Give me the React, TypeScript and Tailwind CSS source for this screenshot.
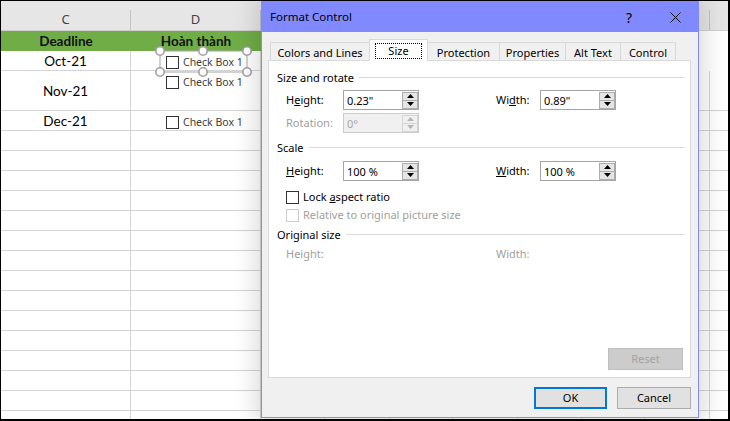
import React from "react";

const colW = [
  "w-[130px]",
  "w-[130px]",
  "w-[64px]",
  "w-[65px]",
  "w-[63px]",
  "w-[65px]",
  "w-[64px]",
  "w-[63px]",
  "w-[65px]",
  "w-[64px]",
];

type RowSpec = { h: string; c?: string; rightLines: boolean };

const dataRows: RowSpec[] = [
  { h: "h-[20px]", c: "Oct-21", rightLines: false },
  { h: "h-[40px]", c: "Nov-21", rightLines: true },
  { h: "h-[20px]", c: "Dec-21", rightLines: true },
  ...Array.from({ length: 15 }, () => ({ h: "h-[20px]", rightLines: true })),
];

function Sheet() {
  return (
    <div className="flex flex-col font-['Lato',sans-serif]">
      <div className="flex h-[30px] shrink-0 bg-[#e6e6e6] border-b border-[#d0d0d0]">
        {colW.map((w, i) => (
          <div key={i} className={`${w} shrink-0 flex h-full`}>
            <div className="flex-1 flex items-center justify-center pt-[9px] text-[13px] text-[#444] font-['Noto_Sans',sans-serif]">
              {i === 0 ? "C" : i === 1 ? "D" : ""}
            </div>
            <div className="w-px h-[20px] self-end bg-[#c4c4c4]" />
          </div>
        ))}
      </div>
      <div className="flex h-[20px] shrink-0">
        {colW.map((w, i) => (
          <div
            key={i}
            className={`${w} shrink-0 flex items-center justify-center pt-px text-[13.5px] font-bold text-[#111] ${
              i < 2 ? "bg-[#70ad47]" : "bg-white"
            }`}
          >
            {i === 0 ? "Deadline" : i === 1 ? "Hoàn thành" : ""}
          </div>
        ))}
      </div>
      {dataRows.map((r, ri) => (
        <div key={ri} className={`flex ${r.h} shrink-0`}>
          {colW.map((w, i) => (
            <div
              key={i}
              className={`${w} shrink-0 flex items-center justify-center pt-px text-[13.5px] text-black ${
                i < 2 || r.rightLines
                  ? "border-b border-r border-[#d4d4d4]"
                  : ""
              }`}
            >
              {i === 0 ? r.c ?? "" : ""}
            </div>
          ))}
        </div>
      ))}
    </div>
  );
}

function SheetCheck({ pos }: { pos: string }) {
  return (
    <div className={`absolute left-[165px] ${pos} flex items-center h-[13px] gap-[4px]`}>
      <div className="w-[13px] h-[13px] border border-[#333] bg-white" />
      <span className="text-[10.5px] text-[#404040] leading-none">Check Box 1</span>
    </div>
  );
}

function Selection() {
  const pts = [
    [6, 6],
    [49, 6],
    [93, 6],
    [6, 27],
    [49, 27],
    [93, 27],
  ];
  return (
    <svg
      className="absolute left-[153px] top-[44px]"
      width="100"
      height="34"
      viewBox="0 0 100 34"
    >
      <rect x="6" y="6" width="87" height="21" fill="none" stroke="#a6a6a6" strokeWidth="1" />
      {pts.map(([x, y], i) => (
        <circle key={i} cx={x} cy={y} r="4.2" fill="white" stroke="#a0a0a0" strokeWidth="1.6" />
      ))}
    </svg>
  );
}

function Arrow({ up, color }: { up: boolean; color: string }) {
  return (
    <svg width="7" height="4" viewBox="0 0 7 4">
      <path d={up ? "M0 4 L3.5 0 L7 4 Z" : "M0 0 L3.5 4 L7 0 Z"} fill={color} />
    </svg>
  );
}

function Spin({ disabled }: { disabled?: boolean }) {
  const c = disabled ? "#b4b4b4" : "#000";
  const box = disabled
    ? "border-[#d6d6d6] bg-[#f0f0f0]"
    : "border-[#adadad] bg-[#e5e5e5]";
  return (
    <div className="flex flex-col w-[16px] ml-auto">
      <div className={`h-[9px] flex items-center justify-center border ${box}`}>
        <Arrow up color={c} />
      </div>
      <div className={`h-[9px] -mt-px flex items-center justify-center border ${box}`}>
        <Arrow up={false} color={c} />
      </div>
    </div>
  );
}

function Field({ value, disabled }: { value: string; disabled?: boolean }) {
  return (
    <div
      className={`flex items-center w-[76px] h-[20px] border pl-[3px] ${
        disabled
          ? "border-[#cccccc] bg-[#f0f0f0] text-[#a6a6a6]"
          : "border-[#a5a5a5] bg-white text-black"
      }`}
    >
      <span className="text-[11px] leading-none">{value}</span>
      <Spin disabled={disabled} />
    </div>
  );
}

function Section({ title, mt }: { title: string; mt: string }) {
  return (
    <div className={`flex items-center h-[16px] ${mt} pl-[8px] pr-[5px] shrink-0`}>
      <span className="text-[11px] text-black leading-none">{title}</span>
      <div className="flex-1 h-px bg-[#dcdcdc] ml-[5px]" />
    </div>
  );
}

function Tab({
  label,
  w,
  selected,
  first,
}: {
  label: string;
  w: string;
  selected?: boolean;
  first?: boolean;
}) {
  if (selected) {
    return (
      <div
        className={`${w} ${first ? "" : "-ml-px"} h-[22px] -mb-px relative z-10 bg-white border-l border-t border-r border-[#d9d9d9] flex items-center justify-center`}
      >
        <div className="w-[47px] h-[16px] border border-dotted border-black flex items-center justify-center text-[11px] text-black leading-none">
          {label}
        </div>
      </div>
    );
  }
  return (
    <div
      className={`${w} ${first ? "" : "-ml-px"} h-[18px] bg-[#f0f0f0] border-l border-t border-r border-[#d9d9d9] flex items-center justify-center pt-px text-[11px] text-black leading-none`}
    >
      {label}
    </div>
  );
}

function Dialog() {
  return (
    <div className="absolute left-[260px] top-0 w-[438px] h-[417px] border border-[#8189ff] bg-[#f0f0f0] flex flex-col shadow-[0_0_22px_6px_rgba(0,0,0,0.14)]">
      <div className="h-[30px] shrink-0 bg-[#8189ff] flex items-center pl-[8px]">
        <span className="text-[11.5px] text-black leading-none">Format Control</span>
        <div className="ml-auto flex h-full">
          <div className="w-[46px] flex items-center justify-center text-[14px] text-black">?</div>
          <div className="w-[46px] flex items-center justify-center">
            <svg width="11" height="11" viewBox="0 0 11 11">
              <path d="M0.5 0.5 L10.5 10.5 M10.5 0.5 L0.5 10.5" stroke="#000" strokeWidth="1" />
            </svg>
          </div>
        </div>
      </div>

      <div className="flex items-end h-[21px] mt-[7px] pl-[8px] shrink-0">
        <Tab label="Colors and Lines" w="w-[100px]" first />
        <Tab label="Size" w="w-[59px]" selected />
        <Tab label="Protection" w="w-[73px]" />
        <Tab label="Properties" w="w-[67px]" />
        <Tab label="Alt Text" w="w-[56px]" />
        <Tab label="Control" w="w-[56px]" />
      </div>

      <div className="ml-[6px] w-[423px] h-[318px] shrink-0 border border-[#d9d9d9] bg-white flex flex-col">
        <Section title="Size and rotate" mt="mt-[8px]" />
        <div className="flex items-center h-[20px] mt-[5px] pl-[17px] shrink-0 text-[11px] text-black">
          <span className="w-[57px]">
            H<span className="underline">e</span>ight:
          </span>
          <Field value={'0.23"'} />
          <span className="w-[77px]" />
          <span className="w-[44px]">
            Wi<span className="underline">d</span>th:
          </span>
          <Field value={'0.89"'} />
        </div>
        <div className="flex items-center h-[20px] mt-[3px] pl-[17px] shrink-0 text-[11px] text-[#a0a0a0]">
          <span className="w-[57px]">Rotation:</span>
          <Field value="0°" disabled />
        </div>

        <Section title="Scale" mt="mt-[6px]" />
        <div className="flex items-center h-[20px] mt-[6px] pl-[17px] shrink-0 text-[11px] text-black">
          <span className="w-[57px]">
            <span className="underline">H</span>eight:
          </span>
          <Field value="100 %" />
          <span className="w-[77px]" />
          <span className="w-[44px]">
            <span className="underline">W</span>idth:
          </span>
          <Field value="100 %" />
        </div>
        <div className="flex items-center h-[16px] mt-[8px] pl-[17px] gap-[4px] shrink-0 text-[11px] text-black">
          <div className="w-[13px] h-[13px] border border-[#333] bg-white" />
          <span>
            Lock <span className="underline">a</span>spect ratio
          </span>
        </div>
        <div className="flex items-center h-[16px] mt-[2px] pl-[17px] gap-[4px] shrink-0 text-[11px] text-[#a0a0a0]">
          <div className="w-[13px] h-[13px] border border-[#cccccc] bg-white" />
          <span>Relative to original picture size</span>
        </div>

        <Section title="Original size" mt="mt-[3px]" />
        <div className="flex items-center h-[16px] mt-[4px] pl-[17px] shrink-0 text-[11px] text-[#a0a0a0]">
          <span className="w-[210px]">Height:</span>
          <span>Width:</span>
        </div>

        <div className="flex-1" />
        <div className="self-end mr-[7px] mb-[7px] w-[75px] h-[22px] border border-[#bfbfbf] bg-[#cccccc] flex items-center justify-center text-[11px] text-[#a3a3a3]">
          Reset
        </div>
      </div>

      <div className="flex justify-end gap-[10px] pr-[7px] mt-[9px] shrink-0">
        <div className="w-[73px] h-[22px] border-2 border-[#0078d7] bg-[#e1e1e1] flex items-center justify-center text-[11px] text-black">
          OK
        </div>
        <div className="w-[74px] h-[22px] border border-[#adadad] bg-[#e1e1e1] flex items-center justify-center text-[11px] text-black">
          Cancel
        </div>
      </div>
    </div>
  );
}

export default function App() {
  return (
    <div className="relative w-[730px] h-[421px] overflow-hidden bg-white border-t border-l border-r-2 border-b-2 border-black font-['Noto_Sans',sans-serif]">
      <Sheet />
      <SheetCheck pos="top-[55px]" />
      <SheetCheck pos="top-[75px]" />
      <SheetCheck pos="top-[115px]" />
      <Selection />
      <Dialog />
    </div>
  );
}
